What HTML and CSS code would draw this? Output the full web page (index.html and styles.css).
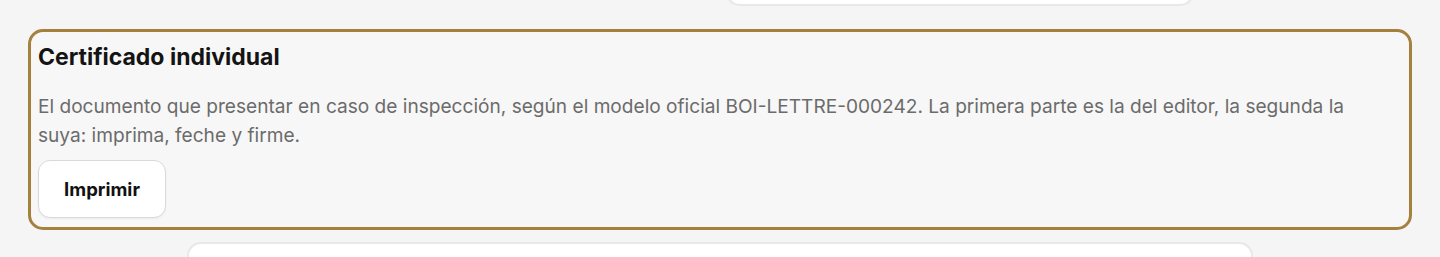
FILE: index.html
```html
<!DOCTYPE html>
<html lang="es">
<head>
<meta charset="utf-8">
<title>Certificado individual</title>
<link rel="stylesheet" href="styles.css">
</head>
<body>
<div class="page">
  <div class="ghost ghost-top"></div>
  <section class="card">
    <h2 class="card-title">Certificado individual</h2>
    <p class="card-text">El documento que presentar en caso de inspección, según el modelo oficial BOI-LETTRE-000242. La primera parte es la del editor, la segunda la suya: imprima, feche y firme.</p>
    <button class="btn" type="button">Imprimir</button>
  </section>
  <div class="ghost ghost-bottom"></div>
</div>
</body>
</html>
```
FILE: styles.css
```css
html, body {
  margin: 0;
  padding: 0;
  background: #f5f5f5;
  font-family: Inter, "Noto Sans", "Liberation Sans", sans-serif;
}
.page {
  display: flex;
  flex-direction: column;
  height: 257px;
  overflow: hidden;
}
.ghost {
  background: #fff;
  border: 2px solid #e8e8e8;
  border-radius: 14px;
  box-sizing: border-box;
  flex: none;
}
.ghost-top {
  margin-left: 726px;
  width: 468px;
  height: 40px;
  margin-top: -34px;
}
.ghost-bottom {
  margin-left: 187px;
  width: 1066px;
  height: 60px;
  margin-top: 12px;
}
.card {
  flex: none;
  box-sizing: border-box;
  margin: 23px 0 0 28px;
  width: 1384px;
  height: 201px;
  border: 3px solid #a5803f;
  border-radius: 15px;
  background: #f7f7f7;
  padding: 10px 7px 7px;
  display: flex;
  flex-direction: column;
  align-items: flex-start;
}
.card-title {
  margin: 0;
  font-size: 23px;
  line-height: 30px;
  font-weight: 700;
  color: #141414;
}
.card-text {
  margin: 20px 0 0;
  font-size: 19.1px;
  line-height: 29px;
  color: #6b6b6b;
  max-width: 1320px;
}
.btn {
  margin-top: 10px;
  width: 128px;
  height: 58px;
  background: #fff;
  border: 1px solid #d9d9d9;
  border-radius: 12px;
  font-family: inherit;
  font-size: 18.5px;
  font-weight: 700;
  color: #111;
  box-shadow: 0 1px 2px rgba(0,0,0,0.05);
  cursor: pointer;
}
```
